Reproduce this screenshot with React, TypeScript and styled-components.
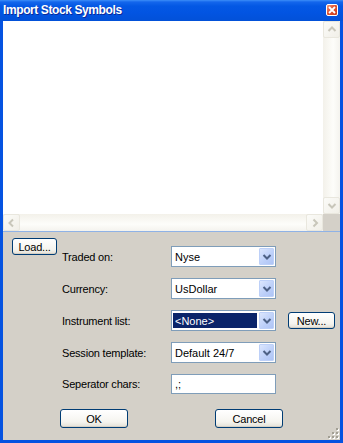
import { createGlobalStyle, styled } from 'styled-components';

const GlobalStyle = createGlobalStyle`
  html, body { margin: 0; padding: 0; background: #fff; }
  body { font-family: 'Liberation Sans', Arial, sans-serif; font-size: 11px; color: #000; }
`;

const Window = styled.div`
  width: 343px;
  height: 443px;
  display: flex;
  flex-direction: column;
  background: #0553e1;
`;

const TitleBar = styled.div`
  height: 21px;
  flex: none;
  display: flex;
  align-items: center;
  justify-content: space-between;
  padding: 0 5px 1px 3px;
  box-sizing: border-box;
  background: linear-gradient(#3c8ef8 0, #1466ec 2px, #0458e4 6px, #0254e2 60%, #0251d8 100%);
`;

const Title = styled.span`
  color: #fff;
  font-weight: bold;
  font-size: 12px;
  letter-spacing: -0.4px;
  text-shadow: 1px 1px 0 #0b2a9a;
`;

const CloseBtn = styled.div`
  width: 12px;
  height: 12px;
  box-sizing: border-box;
  border: 1px solid #fff;
  border-radius: 2px;
  background: linear-gradient(135deg, #f09a82, #e0512f 45%, #c83c1c);
  display: flex;
  align-items: center;
  justify-content: center;
`;

const Frame = styled.div`
  flex: 1;
  display: flex;
  flex-direction: column;
  padding: 0 3px 3px;
`;

const ListPane = styled.div`
  height: 211px;
  flex: none;
  display: grid;
  grid-template-columns: 1fr 17px;
  grid-template-rows: 1fr 17px;
  background: #fff;
  border-bottom: 1px solid #8fb2e6;
  box-sizing: border-box;
`;

const ListArea = styled.div`
  background: #fff;
`;

const ScrollBar = styled.div<{ $vertical?: boolean }>`
  display: flex;
  flex-direction: ${(p) => (p.$vertical ? 'column' : 'row')};
  background: ${(p) =>
    p.$vertical
      ? 'linear-gradient(to right, #f3f1ea, #fdfdfa 60%, #f4f3ee)'
      : 'linear-gradient(to bottom, #f3f1ea, #fdfdfa 60%, #f4f3ee)'};
`;

const Track = styled.div`
  flex: 1;
`;

const ArrowBtn = styled.div`
  width: 17px;
  height: 17px;
  flex: none;
  box-sizing: border-box;
  border: 1px solid #e9e7de;
  border-radius: 2px;
  background: linear-gradient(135deg, #fbfbf8, #f1efe8);
  display: flex;
  align-items: center;
  justify-content: center;
`;

const Corner = styled.div`
  background: #d4d0c8;
`;

const Panel = styled.div`
  flex: 1;
  position: relative;
  background: #d4d0c8;
  padding: 6px 0 0 9px;
  display: flex;
  flex-direction: column;
`;

const TopSection = styled.div`
  display: flex;
  align-items: flex-start;
  gap: 5px;
`;

const Form = styled.div`
  display: grid;
  grid-template-columns: 109px 105px auto;
  row-gap: 11px;
  align-items: center;
  margin-top: 8px;
`;

const Label = styled.span`
  letter-spacing: -0.2px;
  white-space: nowrap;
`;

const Button = styled.div<{ $w: number; $h?: number }>`
  flex: none;
  width: ${(p) => p.$w}px;
  height: ${(p) => p.$h ?? 17}px;
  box-sizing: border-box;
  border: 1px solid #003c74;
  border-radius: 3px;
  background: linear-gradient(#ffffff, #f5f4ef 70%, #e3e0d6);
  box-shadow: inset 0 -1px 0 #d6d0c5;
  display: flex;
  align-items: center;
  justify-content: center;
  letter-spacing: -0.2px;
  white-space: nowrap;
`;

const SideButton = styled(Button)`
  margin-left: 12px;
`;

const Combo = styled.div`
  width: 105px;
  height: 21px;
  box-sizing: border-box;
  border: 1px solid #7f9db9;
  background: #fff;
  display: flex;
  align-items: center;
`;

const ComboText = styled.div<{ $selected?: boolean }>`
  flex: 1;
  align-self: stretch;
  margin: 2px 2px 2px 1px;
  padding-left: 2px;
  display: flex;
  align-items: center;
  background: ${(p) => (p.$selected ? '#0a246a' : 'transparent')};
  color: ${(p) => (p.$selected ? '#fff' : '#000')};
`;

const DropBtn = styled.div`
  width: 15px;
  height: 17px;
  margin-right: 1px;
  box-sizing: border-box;
  border: 1px solid #bdd0f8;
  border-radius: 1px;
  background: linear-gradient(135deg, #dbe6fd, #bccff9 60%, #aec4f5);
  display: flex;
  align-items: center;
  justify-content: center;
`;

const TextBox = styled.div`
  width: 105px;
  height: 20px;
  box-sizing: border-box;
  border: 1px solid #7f9db9;
  background: #fff;
  padding-left: 3px;
  display: flex;
  align-items: center;
`;

const ButtonRow = styled.div`
  display: flex;
  gap: 87px;
  margin: 15px 0 0 48px;
`;

const Gripper = styled.svg`
  position: absolute;
  right: 1px;
  bottom: 1px;
`;

const Chevron = ({ dir, color }: { dir: 'up' | 'down' | 'left' | 'right'; color: string }) => {
  const d = {
    up: 'M1.5 6 L5 2.5 L8.5 6',
    down: 'M1.5 3 L5 6.5 L8.5 3',
    left: 'M6 1.5 L2.5 5 L6 8.5',
    right: 'M3.5 1.5 L7 5 L3.5 8.5',
  }[dir];
  return (
    <svg width="10" height="10" viewBox="0 0 10 10">
      <path d={d} fill="none" stroke={color} strokeWidth="2" />
    </svg>
  );
};

const rows = [
  { label: 'Traded on:', value: 'Nyse' },
  { label: 'Currency:', value: 'UsDollar' },
  { label: 'Instrument list:', value: '<None>', selected: true, extra: 'New...' },
  { label: 'Session template:', value: 'Default 24/7' },
];

const App = () => {
  return (
    <>
      <GlobalStyle />
      <Window>
        <TitleBar>
          <Title>Import Stock Symbols</Title>
          <CloseBtn>
            <svg width="8" height="8" viewBox="0 0 8 8">
              <path d="M1 1 L7 7 M7 1 L1 7" stroke="#fff" strokeWidth="1.8" />
            </svg>
          </CloseBtn>
        </TitleBar>
        <Frame>
          <ListPane>
            <ListArea />
            <ScrollBar $vertical>
              <ArrowBtn>
                <Chevron dir="up" color="#c8c6ba" />
              </ArrowBtn>
              <Track />
              <ArrowBtn>
                <Chevron dir="down" color="#c8c6ba" />
              </ArrowBtn>
            </ScrollBar>
            <ScrollBar>
              <ArrowBtn>
                <Chevron dir="left" color="#c8c6ba" />
              </ArrowBtn>
              <Track />
              <ArrowBtn>
                <Chevron dir="right" color="#c8c6ba" />
              </ArrowBtn>
            </ScrollBar>
            <Corner />
          </ListPane>
          <Panel>
            <TopSection>
              <Button $w={45} $h={17}>Load...</Button>
              <Form>
                {rows.map((r) => (
                  <>
                    <Label key={r.label}>{r.label}</Label>
                    <Combo key={r.label + 'c'}>
                      <ComboText $selected={r.selected}>{r.value}</ComboText>
                      <DropBtn>
                        <Chevron dir="down" color="#4d6185" />
                      </DropBtn>
                    </Combo>
                    {r.extra ? (
                      <SideButton key={r.label + 'b'} $w={47} $h={17}>
                        {r.extra}
                      </SideButton>
                    ) : (
                      <span key={r.label + 'e'} />
                    )}
                  </>
                ))}
                <Label>Seperator chars:</Label>
                <TextBox>,;</TextBox>
                <span />
              </Form>
            </TopSection>
            <ButtonRow>
              <Button $w={68} $h={19}>OK</Button>
              <Button $w={68} $h={19}>Cancel</Button>
            </ButtonRow>
            <Gripper width="12" height="12" viewBox="0 0 12 12">
              {[
                [9, 1],
                [5, 5],
                [9, 5],
                [1, 9],
                [5, 9],
                [9, 9],
              ].map(([x, y]) => (
                <g key={`${x}-${y}`}>
                  <rect x={x + 1} y={y + 1} width="2" height="2" fill="#fff" />
                  <rect x={x} y={y} width="2" height="2" fill="#a29f94" />
                </g>
              ))}
            </Gripper>
          </Panel>
        </Frame>
      </Window>
    </>
  );
};

export default App;
